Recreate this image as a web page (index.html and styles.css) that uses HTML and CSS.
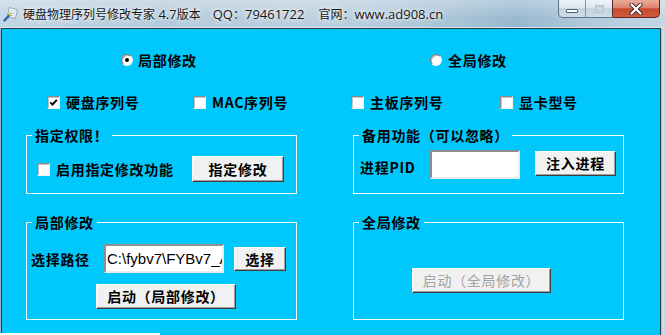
FILE: index.html
```html
<!DOCTYPE html>
<html lang="zh-CN">
<head>
<meta charset="utf-8">
<title>硬盘物理序列号修改专家</title>
<link rel="stylesheet" href="styles.css">
</head>
<body>
<div class="window">
  <header class="titlebar">
    <svg class="app-icon" width="16" height="16" viewBox="0 0 16 16">
      <path d="M6.5 1.5 L14.5 3.8 L12.3 12.8 L4.3 10.5 Z" fill="#f4f8fb" stroke="#7b96b0" stroke-width="0.8"/>
      <path d="M7.4 4.6 L12.6 6 M6.9 6.7 L12.1 8.1 M6.4 8.8 L11.6 10.2" stroke="#a8c8e6" stroke-width="0.8"/>
      <path d="M1.5 14.5 L6.8 8.6" stroke="#2f66b3" stroke-width="2.4" stroke-linecap="round"/>
      <path d="M6.2 9.3 L8.4 6.9" stroke="#f0c43c" stroke-width="2.6"/>
    </svg>
    <span class="title-text title-name"><span class="tc">硬盘物理序列号修改专家</span> 4.7<span class="tc">版本</span></span>
    <span class="title-text title-qq">QQ<span class="tc">：</span>79461722</span>
    <span class="title-text title-site"><span class="tc">官网：</span>www.ad908.cn</span>
    <div class="captions">
      <div class="cap-pair">
        <span class="cap cap-min"><i class="min-glyph"></i></span>
        <span class="cap cap-max"><i class="max-glyph"></i></span>
      </div>
      <span class="cap cap-close">
        <svg width="14" height="12" viewBox="0 0 14 12">
          <path d="M2.5 1.5 L11.5 10.5 M11.5 1.5 L2.5 10.5" stroke="#3c2a2a" stroke-width="4" stroke-linecap="round"/>
          <path d="M2.5 1.5 L11.5 10.5 M11.5 1.5 L2.5 10.5" stroke="#ffffff" stroke-width="2.2" stroke-linecap="round"/>
        </svg>
      </span>
    </div>
  </header>
  <div class="frame">
    <div class="frame-left"></div>
    <main class="client">
      <div class="row-radios">
        <label class="radio-item radio-left"><span class="radio checked"></span>局部修改</label>
        <label class="radio-item radio-right"><span class="radio"></span>全局修改</label>
      </div>
      <div class="row-checks">
        <label class="check-item c1"><span class="check"><svg width="9" height="9" viewBox="0 0 9 9"><polyline points="1.3,4.3 3.5,6.6 7.8,1.9" fill="none" stroke="#000" stroke-width="1.9"/></svg></span>硬盘序列号</label>
        <label class="check-item c2"><span class="check"></span>MAC序列号</label>
        <label class="check-item c3"><span class="check"></span>主板序列号</label>
        <label class="check-item c4"><span class="check"></span>显卡型号</label>
      </div>
      <div class="groups groups-top">
        <fieldset class="group">
          <legend>指定权限！</legend>
          <div class="g1-row">
            <label class="check-item enable"><span class="check"></span>启用指定修改功能</label>
            <button class="btn btn-assign" type="button">指定修改</button>
          </div>
        </fieldset>
        <fieldset class="group">
          <legend>备用功能（可以忽略）</legend>
          <div class="g2-row">
            <span class="field-label pid-label">进程PID</span>
            <span class="input pid-input"></span>
            <button class="btn btn-inject" type="button">注入进程</button>
          </div>
        </fieldset>
      </div>
      <div class="groups groups-bottom">
        <fieldset class="group">
          <legend>局部修改</legend>
          <div class="g3-row">
            <span class="field-label path-label">选择路径</span>
            <span class="input path-input">C:\fybv7\FYBv7_A</span>
            <button class="btn btn-choose" type="button">选择</button>
          </div>
          <button class="btn btn-start-local" type="button">启动（局部修改）</button>
        </fieldset>
        <fieldset class="group">
          <legend>全局修改</legend>
          <button class="btn btn-start-global disabled" type="button">启动（全局修改）</button>
        </fieldset>
      </div>
      <div class="status-strip"></div>
    </main>
    <div class="frame-right"></div>
  </div>
</div>
</body>
</html>
```

FILE: styles.css
```css
* { box-sizing: border-box; }
html, body { margin: 0; padding: 0; }
body {
  width: 665px;
  height: 335px;
  overflow: hidden;
  background: #00c8fc;
  font-family: "Noto Sans CJK SC", sans-serif;
}
.window {
  width: 665px;
  height: 335px;
  display: flex;
  flex-direction: column;
  overflow: hidden;
  background: #b8cddc;
}

/* ---------- title bar ---------- */
.titlebar {
  height: 28px;
  flex: none;
  display: flex;
  align-items: center;
  border-bottom: 1px solid #dbe7ef;
  background:
    linear-gradient(180deg, rgba(255,255,255,0.30), rgba(255,255,255,0) 70%),
    linear-gradient(90deg, #c2d6e4 0%, #b5cbdb 25%, #bcd0df 50%, #a9c3d7 68%, #98b8d0 78%, #b0c8da 88%, #c4d6e3 100%);
}
.app-icon { margin-left: 3px; margin-top: 1px; flex: none; }
.title-text {
  font-family: "Open Sans", "Noto Sans CJK SC", sans-serif;
  font-size: 13px;
  line-height: 15px;
  color: #161616;
  white-space: pre;
  text-shadow: 0 0 6px rgba(255,255,255,0.9), 0 0 3px rgba(255,255,255,0.8);
}
.title-text .tc {
  font-family: "Noto Sans CJK SC", sans-serif;
  font-size: 12px;
}
.title-name { margin-left: 4px; }
.title-qq { margin-left: 12px; }
.title-site { margin-left: 14px; }
.captions {
  margin-left: auto;
  margin-right: 5px;
  align-self: flex-start;
  display: flex;
}
.cap-pair {
  display: flex;
  height: 18px;
  border: 1px solid #617386;
  border-top: none;
  border-right: none;
  border-radius: 0 0 0 5px;
  overflow: hidden;
  background: linear-gradient(180deg, #eef3f8 0%, #dde6ee 45%, #c3d3e1 52%, #cfdde9 100%);
}
.cap {
  display: flex;
  align-items: center;
  justify-content: center;
}
.cap-min { width: 27px; border-right: 1px solid #8496a8; padding-top: 4px; }
.cap-max { width: 27px; border-right: 1px solid #5b2a22; }
.min-glyph {
  display: block;
  width: 12px;
  height: 4px;
  background: #fff;
  border: 1px solid #55606b;
  border-radius: 1px;
}
.max-glyph {
  display: block;
  width: 9px;
  height: 8px;
  border: 1px solid #b4c1cd;
  box-shadow: inset 0 2px 0 #c6d2dc;
}
.cap-close {
  width: 47px;
  height: 18px;
  border: 1px solid #5b2a22;
  border-top: none;
  border-left: none;
  border-radius: 0 0 5px 0;
  background: linear-gradient(180deg, #e9ab9b 0%, #dc8670 45%, #c74a30 52%, #d2583b 100%);
}

/* ---------- frame & client ---------- */
.frame { flex: 1; display: flex; min-height: 0; }
.frame-left { width: 1px; flex: none; background: #9fb5c6; }
.frame-right { flex: 1; background: linear-gradient(90deg, #aabfcf, #d5e0e8 60%, #bccddb); }
.client {
  width: 660px;
  flex: none;
  background: #00c8fc;
  border: 1px solid #2c3a44;
  border-bottom: none;
  display: flex;
  flex-direction: column;
  font-weight: 700;
  font-size: 14px;
  line-height: 16px;
  letter-spacing: 0.7px;
  color: #000;
}

/* radios */
.row-radios {
  margin-top: 19px;
  height: 24px;
  display: flex;
  align-items: center;
  padding-left: 119px;
}
.radio-item { display: flex; align-items: center; }
.radio-left { width: 309px; gap: 5px; }
.radio-right { gap: 6px; }
.radio {
  width: 12px;
  height: 12px;
  flex: none;
  border-radius: 50%;
  background: #fff;
  border: 1px solid;
  border-color: #7c7c7c #eef2f4 #eef2f4 #7c7c7c;
  box-shadow: inset 1px 1px 0 #b9b9b9;
  display: flex;
  align-items: center;
  justify-content: center;
}
.radio.checked::after {
  content: "";
  width: 4px;
  height: 4px;
  border-radius: 50%;
  background: #000;
}

/* checkboxes */
.row-checks {
  margin-top: 18px;
  height: 24px;
  display: flex;
  align-items: center;
  padding-left: 45px;
}
.check-item { display: flex; align-items: center; gap: 6px; }
.c1 { width: 146px; }
.c2 { width: 158px; }
.c3 { width: 149px; }
.check {
  width: 13px;
  height: 13px;
  flex: none;
  background: #fff;
  border: 1px solid;
  border-color: #8a8a8a #f2f2f2 #f2f2f2 #8a8a8a;
  box-shadow: inset 1px 1px 0 #c4c4c4;
  display: flex;
  align-items: center;
  justify-content: center;
}

/* group boxes */
.groups {
  display: grid;
  grid-template-columns: 271px 271px;
  column-gap: 56px;
  padding-left: 24px;
}
.groups-top { margin-top: 13px; }
.groups-bottom { margin-top: 20px; }
.group {
  margin: 0;
  padding: 0;
  min-width: 0;
  border: 1px solid #f7fbfd;
}
.group legend {
  margin-left: 5px;
  padding: 0 3px;
  line-height: 16px;
}

.g1-row {
  display: flex;
  align-items: center;
  margin: 13px 0 11px;
  padding-left: 10px;
  height: 26px;
}
.enable { width: 155px; }

.g2-row {
  display: flex;
  align-items: flex-start;
  margin: 7px 0 14px;
  padding-left: 6px;
  height: 29px;
}
.pid-label { width: 70px; margin-top: 9px; }

.g3-row {
  display: flex;
  align-items: flex-start;
  margin-top: 14px;
  padding-left: 4px;
  height: 29px;
}
.path-label { width: 73px; margin-top: 7px; }

/* inputs */
.input {
  display: block;
  height: 29px;
  flex: none;
  background: #fff;
  border: 2px solid;
  border-color: #8e8e8e #ececec #ececec #8e8e8e;
  overflow: hidden;
  white-space: nowrap;
}
.pid-input { width: 90px; }
.path-input {
  width: 120px;
  padding-left: 1px;
  font-family: "Liberation Sans", Arial, sans-serif;
  font-weight: 400;
  font-size: 15px;
  line-height: 25px;
  letter-spacing: 0;
  color: #000;
}

/* buttons */
.btn {
  display: flex;
  align-items: center;
  justify-content: center;
  flex: none;
  margin: 0;
  padding: 0 0 1px;
  font: inherit;
  letter-spacing: inherit;
  color: #000;
  background: #f1f1f1;
  border: 1px solid;
  border-color: #ffffff #3c3c3c #3c3c3c #ffffff;
  box-shadow: inset -1px -1px 0 #a0a0a0;
  border-radius: 0;
}
.btn-assign { width: 92px; height: 26px; }
.btn-inject { margin-left: 15px; margin-top: 1px; width: 81px; height: 25px; }
.btn-choose { margin-left: 10px; margin-top: 3px; width: 52px; height: 24px; }
.btn-start-local { margin: 11px 0 10px 69px; width: 140px; height: 25px; }
.btn-start-global { margin: 38px 0 0 58px; width: 139px; height: 25px; }
.btn.disabled { color: #a2a2a2; font-weight: 400; }

.status-strip {
  margin-top: 13px;
  margin-left: -2px;
  width: 160px;
  height: 2px;
  flex: none;
  background: #fff;
}
```
